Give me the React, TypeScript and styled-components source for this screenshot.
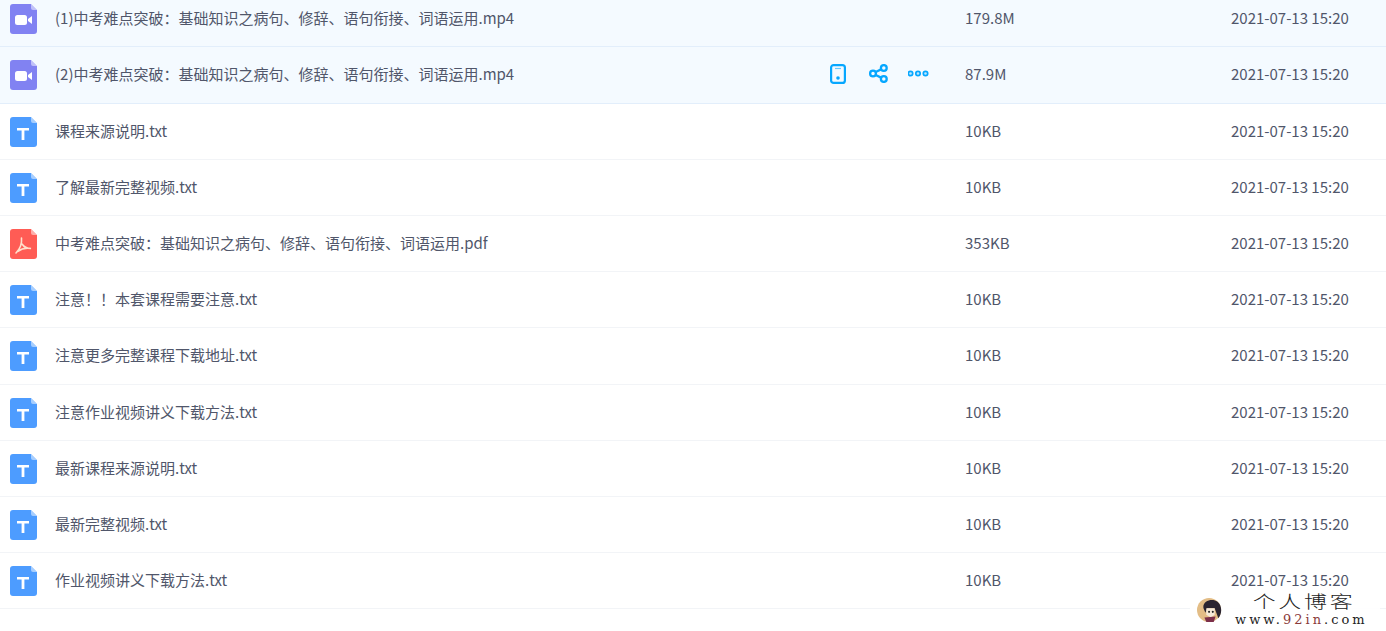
import React from "react";
import styled, { createGlobalStyle } from "styled-components";

type Kind = "video" | "text" | "pdf";

type FileItem = {
  name: string;
  size: string;
  kind: Kind;
  active?: boolean;
  tools?: boolean;
};

const DATE = "2021-07-13 15:20";
const MAIN_TITLE = "中考难点突破：基础知识之病句、修辞、语句衔接、词语运用";

const files: FileItem[] = [
  { name: `(1)${MAIN_TITLE}.mp4`, size: "179.8M", kind: "video", active: true },
  { name: `(2)${MAIN_TITLE}.mp4`, size: "87.9M", kind: "video", active: true, tools: true },
  { name: "课程来源说明.txt", size: "10KB", kind: "text" },
  { name: "了解最新完整视频.txt", size: "10KB", kind: "text" },
  { name: `${MAIN_TITLE}.pdf`, size: "353KB", kind: "pdf" },
  { name: "注意！！本套课程需要注意.txt", size: "10KB", kind: "text" },
  { name: "注意更多完整课程下载地址.txt", size: "10KB", kind: "text" },
  { name: "注意作业视频讲义下载方法.txt", size: "10KB", kind: "text" },
  { name: "最新课程来源说明.txt", size: "10KB", kind: "text" },
  { name: "最新完整视频.txt", size: "10KB", kind: "text" },
  { name: "作业视频讲义下载方法.txt", size: "10KB", kind: "text" },
];

const kindColor: Record<Kind, string> = {
  video: "#8182f2",
  text: "#4d9cff",
  pdf: "#ff5c55",
};

function FileIcon({ kind }: { kind: Kind }) {
  return (
    <svg width="27" height="30" viewBox="0 0 27 30">
      <path
        d="M3 0H21L27 6V27a3 3 0 0 1-3 3H3a3 3 0 0 1-3-3V3a3 3 0 0 1 3-3Z"
        fill={kindColor[kind]}
      />
      <path d="M21 0L27 6H23a2 2 0 0 1-2-2Z" fill="#fff" fillOpacity=".5" />
      {kind === "video" && (
        <>
          <rect x="5" y="11" width="12" height="10" rx="2.5" fill="#fff" />
          <path d="M18 15L22 12V20L18 17Z" fill="#fff" />
        </>
      )}
      {kind === "text" && <path d="M7 11H19V13.6H14.4V23H11.6V13.6H7Z" fill="#fff" />}
      {kind === "pdf" && (
        <path
          d="M11.5 9C12 14 10 20 6 24M12 15C14 18 17 19.5 21 19.5C16 18.5 11 20 7.5 22.5"
          fill="none"
          stroke="#ffe0cc"
          strokeWidth="1.6"
          strokeLinecap="round"
        />
      )}
    </svg>
  );
}

function PhoneIcon() {
  return (
    <svg width="16" height="20" viewBox="0 0 16 20" fill="none">
      <rect x="1.1" y="1.1" width="13.8" height="17.8" rx="2.5" stroke="#06a7ff" strokeWidth="2.2" />
      <path d="M5 4.5H11" stroke="#06a7ff" strokeWidth="1.2" strokeOpacity=".6" />
      <circle cx="8" cy="14" r="1.8" fill="#06a7ff" />
    </svg>
  );
}

function ShareIcon() {
  return (
    <svg width="19" height="19" viewBox="0 0 19 19" fill="none" stroke="#06a7ff" strokeWidth="2.3">
      <circle cx="4" cy="9.5" r="2.9" />
      <circle cx="14.8" cy="4" r="2.9" />
      <circle cx="14.8" cy="15" r="2.9" />
      <path d="M6.7 8L12.1 5.4M6.7 11L12.1 13.6" />
    </svg>
  );
}

function MoreIcon() {
  return (
    <svg width="21" height="7" viewBox="0 0 21 7" fill="#bfe6ff" stroke="#06a7ff" strokeWidth="1.7">
      <circle cx="2.5" cy="3.5" r="2.2" />
      <circle cx="10" cy="3.5" r="2.2" />
      <circle cx="17.5" cy="3.5" r="2.2" />
    </svg>
  );
}

function Mascot() {
  return (
    <svg width="26" height="26" viewBox="0 0 28 28">
      <circle cx="13" cy="14" r="13" fill="#e3bd86" />
      <path d="M7 12C5 3 21 -1 25 9C27 14 26 19 23 23L19 12L11 12L9 17Z" fill="#2a2430" />
      <path d="M10 12H19V19L15 22L10 19Z" fill="#f6ead9" />
      <path d="M8 22L20 21L18 27H10Z" fill="#7c2f4a" />
      <circle cx="13" cy="16" r="1.1" fill="#222" />
      <circle cx="17" cy="16" r="1.1" fill="#222" />
    </svg>
  );
}

export default function App() {
  return (
    <>
      <GlobalStyle />
      <Page>
        <List>
          {files.map((file) => (
            <Row key={file.name} $active={file.active}>
              <IconCell>
                <FileIcon kind={file.kind} />
              </IconCell>
              <Name>{file.name}</Name>
              {file.tools && (
                <Tools>
                  <ToolButton>
                    <PhoneIcon />
                  </ToolButton>
                  <ToolButton>
                    <ShareIcon />
                  </ToolButton>
                  <ToolButton>
                    <MoreIcon />
                  </ToolButton>
                </Tools>
              )}
              <Size>{file.size}</Size>
              <DateText>{DATE}</DateText>
            </Row>
          ))}
        </List>
        <Watermark>
          <Mascot />
          <WatermarkText>
            <WatermarkTitle>个人博客</WatermarkTitle>
            <WatermarkUrl>
              www.<em>92in</em>.com
            </WatermarkUrl>
          </WatermarkText>
        </Watermark>
      </Page>
    </>
  );
}

const GlobalStyle = createGlobalStyle`
  html, body {
    margin: 0;
    padding: 0;
    background: #fff;
    overflow: hidden;
  }
  body {
    font-family: "Noto Sans CJK SC", "Noto Sans", sans-serif;
  }
`;

const Page = styled.div`
  position: relative;
  width: 1386px;
  height: 631px;
  overflow: hidden;
`;

const List = styled.div`
  display: flex;
  flex-direction: column;
  margin-top: -8.8px;
`;

const Row = styled.div<{ $active?: boolean }>`
  display: flex;
  align-items: center;
  box-sizing: border-box;
  height: 56.2px;
  flex-shrink: 0;
  padding: 0 0 2px 10px;
  background: ${(p) => (p.$active ? "#f4faff" : "#fff")};
  border-bottom: 1px solid ${(p) => (p.$active ? "#e2eefb" : "#f2f4f7")};
  color: #50566a;
  font-size: 15px;
`;

const IconCell = styled.div`
  display: flex;
  width: 45px;
  flex-shrink: 0;
  margin-top: 3px;
`;

const Name = styled.div`
  flex: 1;
  min-width: 0;
  white-space: nowrap;
`;

const Tools = styled.div`
  display: flex;
  align-items: center;
  margin-right: 27px;
`;

const ToolButton = styled.div`
  display: flex;
  align-items: center;
  justify-content: center;
  width: 40px;
  height: 24px;
`;

const Size = styled.div`
  width: 266px;
  flex-shrink: 0;
`;

const DateText = styled.div`
  width: 155px;
  flex-shrink: 0;
  white-space: nowrap;
`;

const Watermark = styled.div`
  position: absolute;
  left: 1190px;
  top: 591px;
  width: 190px;
  height: 37px;
  display: flex;
  align-items: center;
  gap: 12px;
  background: rgba(255, 255, 255, 0.9);
  padding-left: 7px;
  box-sizing: border-box;
`;

const WatermarkText = styled.div`
  display: flex;
  flex-direction: column;
  align-items: center;
  color: #222;
`;

const WatermarkTitle = styled.div`
  font-family: "Liberation Serif", "Noto Sans CJK SC", serif;
  font-weight: 300;
  font-size: 17px;
  line-height: 20px;
  letter-spacing: 2px;
  margin-left: 6px;
  transform: scaleX(1.35);
`;

const WatermarkUrl = styled.div`
  font-family: "DejaVu Serif", "Liberation Serif", serif;
  font-size: 13px;
  line-height: 13px;
  letter-spacing: 3px;
  white-space: nowrap;
  em {
    font-style: normal;
    color: #8a3a3a;
  }
`;
